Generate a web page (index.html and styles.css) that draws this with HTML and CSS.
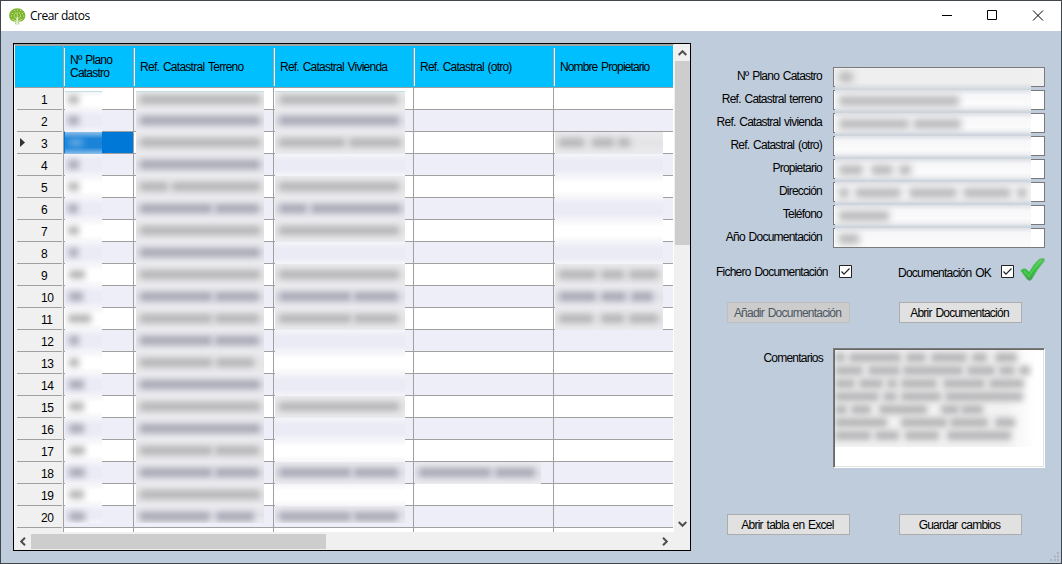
FILE: index.html
```html
<!DOCTYPE html>
<html lang="es">
<head>
<meta charset="utf-8">
<title>Crear datos</title>
<link rel="stylesheet" href="styles.css">
</head>
<body>
<div class="window">
  <header class="titlebar">
    <svg class="logo" width="17" height="17" viewBox="0 0 17 17">
      <path d="M8.200 .3C12.800.3 16.300 3.600 16.300 7.600C16.300 11 14.500 12.800 12 13.600L9.800 13.500L10.300 16.300H6.300L6.800 13.500L4.500 13.600C2 12.800.2 11 .2 7.600C.2 3.600 3.700.3 8.200.3Z" fill="#7fb52c"/>
      <path d="M6.900 16.500L7.600 9.500H8.900L9.700 16.500Z" fill="#e7f2d2"/>
      <path d="M8.200 10V4M8 11L4.500 8M8.500 11L12 8M7 13L3 11M9.500 13L13.500 11" stroke="#dcecc0" stroke-width=".7" fill="none"/>
      <path d="M3 5.500h1M5 2.500h1M8 2h1M11 2.500h1M13 5.500h1M2 8h1M14 8h1M6 5h1M10 5h1M5 7h1M11 7h1" stroke="#cfe4a8" stroke-width="1"/>
    </svg>
    <h1 class="title">Crear datos</h1>
    <svg class="controls" width="104" height="12" viewBox="0 0 104 12" fill="none" stroke="#000">
      <path d="M0 5.500H10"/>
      <path d="M45.500.5H54.500V9.500H45.500Z"/>
      <path d="M91 .5L101 10.500M101 .5L91 10.500"/>
    </svg>
  </header>
  <main class="content">
    <section class="datagrid">
      <div class="viewport">
        <div class="row head">
          <div class="corner"></div>
          <div class="th"><span>Nº Plano<br>Catastro</span></div>
          <div class="th"><span class="loose">Ref. Catastral Terreno</span></div>
          <div class="th"><span>Ref. Catastral Vivienda</span></div>
          <div class="th"><span>Ref. Catastral (otro)</span></div>
          <div class="th"><span class="tight">Nombre Propietario</span></div>
        </div>
        <div id="rows"></div>
      </div>
      <div class="vscroll">
        <svg width="9" height="6" viewBox="0 0 9 6"><path d="M.7 5L4.500 1.200L8.300 5" class="chev"/></svg>
        <div class="vthumb"></div>
        <svg class="down" width="9" height="6" viewBox="0 0 9 6"><path d="M.7 1L4.500 4.800L8.300 1" class="chev"/></svg>
      </div>
      <div class="hscroll">
        <svg width="6" height="9" viewBox="0 0 6 9"><path d="M5 .7L1.200 4.500L5 8.300" class="chev"/></svg>
        <div class="hthumb"></div>
        <svg class="right" width="6" height="9" viewBox="0 0 6 9"><path d="M1 .7L4.800 4.500L1 8.300" class="chev"/></svg>
      </div>
      <div class="scrollcorner"></div>
    </section>
    <section class="details">
      <div class="fields" id="fields"></div>
      <div class="checks">
        <span class="lbl">Fichero Documentación</span>
        <svg class="box" width="13" height="13" viewBox="0 0 13 13"><path d="M.5.5h12v12H.5z" fill="#fff" stroke="#222"/><path d="M2.500 6.500L5 9.200L10.500 3.500" fill="none" stroke="#222" stroke-width="1.200"/></svg>
        <span class="lbl ok">Documentación OK</span>
        <svg class="box box2" width="13" height="13" viewBox="0 0 13 13"><path d="M.5.5h12v12H.5z" fill="#fff" stroke="#222"/><path d="M2.500 6.500L5 9.200L10.500 3.500" fill="none" stroke="#222" stroke-width="1.200"/></svg>
        <svg class="tick" width="25" height="25" viewBox="0 0 25 25">
          <defs><linearGradient id="g" x1="0" y1="0" x2="0" y2="1"><stop offset="0" stop-color="#58c35c"/><stop offset=".55" stop-color="#2fc43a"/><stop offset="1" stop-color="#43a04a"/></linearGradient></defs>
          <path d="M.7 12.500Q3 10 6.300 11.200L9.300 14.300Q14 5.500 19.500 1L24 .6Q24.900 2 23.900 3.500Q17 11 11.500 21.500Q9.500 23.500 7.500 21.500Z" fill="url(#g)" stroke="#62ae72" stroke-width=".7"/>
          <path d="M4 13L9 18.500Q14 9 21.500 2.500" fill="none" stroke="#6edc6c" stroke-width="1.200" opacity=".6"/>
        </svg>
      </div>
      <div class="buttons">
        <button class="btn" disabled>Añadir Documentación</button>
        <button class="btn">Abrir Documentación</button>
      </div>
      <div class="comments">
        <span class="lbl">Comentarios</span>
        <div class="area"><div class="notes" id="notes"></div></div>
      </div>
      <div class="buttons bottom">
        <button class="btn">Abrir tabla en Excel</button>
        <button class="btn">Guardar cambios</button>
      </div>
    </section>
  </main>
  <svg class="grip" width="10" height="10" viewBox="0 0 10 10" fill="#a9b3c0"><path d="M7 0h2v2H7zM4 3.500h2v2H4zM7 3.500h2v2H7zM0 7h2v2H0zM4 7h2v2H4zM7 7h2v2H7z"/></svg>
</div>
<script src="app.js"></script>
</body>
</html>
```

FILE: styles.css
```css
* { box-sizing: border-box; }
body {
  margin: 0;
  overflow: hidden;
  font: 12px/13px "Liberation Sans", Arial, sans-serif;
  letter-spacing: -0.77px;
  word-spacing: 1.2px;
  color: #000;
}
.window {
  position: relative;
  width: 1062px;
  height: 564px;
  border: 1px solid #41464c;
  background: #bfccdc;
}
.titlebar {
  display: flex;
  align-items: center;
  height: 30px;
  background: #fff;
}
.logo { margin-left: 8px; }
.title {
  margin: 0 auto 0 4px;
  font: 12px/16px "Open Sans", "Noto Sans", sans-serif;
  letter-spacing: -0.5px;
  word-spacing: 0;
}
.controls { margin: 0 15px 0 0; }
.content { display: flex; padding: 12px 0 0 12px; }

.datagrid {
  display: grid;
  grid-template: 488px 18px / 660px 16px;
  width: 678px;
  height: 508px;
  border: 1px solid #000;
  background: #f0f0f0;
}
.viewport {
  overflow: hidden;
  border: solid #fff;
  border-width: 2px 1px 0 1px;
  border-top-color: #a0a6a8;
  background: #fff;
}
.row {
  display: grid;
  grid-template-columns: 49px 70px 140px 140px 140px 119px;
  height: 22px;
}
.row.head {
  height: 42px;
  background: #00bfff;
  border-bottom: 1px solid #a0a0a0;
}
.corner { border-right: 1px solid #a0a0a0; }
.th {
  display: flex;
  align-items: center;
  margin: 2px 0 1px;
  padding-left: 5px;
  border-right: 1px solid #a0a0a0;
  border-left: 1px solid #fff;
}
.th:last-child { border-right: 0; }
.loose { letter-spacing: -0.73px; }
.tight { letter-spacing: -0.88px; }
.td, .rh { position: relative; border: solid #a0a0a0; border-width: 0 1px 1px 0; }
.td:last-child { border-right: 0; }
.td { background: #fff; }
.alt .td { background: #eeeef9; }
.row .td.sel { background: #0078d7; }
.rh {
  display: flex;
  align-items: center;
  padding: 2px 0 0 26px;
  letter-spacing: -0.5px;
  background: linear-gradient(#a0a0a0, #a0a0a0) 2px 21px / 45px 1px no-repeat, #f0f0f0;
  border-bottom: 0;
}
.rh svg { position: absolute; left: 5px; top: 6px; }

/* privacy veil laid over a cell and its grid lines */
.veil { position: absolute; left: 1px; top: 0; height: 22px; overflow: hidden; background: linear-gradient(#f4f4f9, #fff 30%, #fff 70%, #f4f4f9); }
.alt .veil { background: linear-gradient(#f4f4f9, #ebebf6 30%, #ebebf6 70%, #f4f4f9); }
.veil.full { background: linear-gradient(#ebebef, #e4e4e6 50%, #ebebef); }
.alt .veil.full { background: linear-gradient(#ebebef, #e1e1e9 50%, #ebebef); }
.sel .veil { background: linear-gradient(#8fc0ea, #1b83d8 30%, #1b83d8 70%, #8fc0ea); }
.first .veil { top: 3px; height: 19px; border-top: 1px solid #c3dfe2; }
.first .smear { top: 3px; }
.last .veil { height: 17px; }
.smear {
  position: absolute;
  top: 6px;
  height: 9px;
  background: #b6b6b8;
  filter: blur(3px);
}
.alt .smear { background: #a9a9b6; }
.sel .smear { background: #5aa5e0; }

.vscroll { display: flex; flex-direction: column; align-items: center; padding: 6px 0 5px; }
.hscroll { display: flex; align-items: center; padding: 0 6px; margin-top: 1px; }
.chev { fill: none; stroke: #505050; stroke-width: 2; }
.vthumb { width: 15px; height: 184px; margin-top: 5px; background: #cdcdcd; }
.down { margin-top: auto; }
.hthumb { width: 295px; height: 15px; margin-left: 5px; background: #cdcdcd; }
.right { margin-left: auto; }

.details { width: 370px; padding-top: 24px; }
.fields { display: grid; gap: 3px; }
.field { display: grid; grid-template-columns: 132px 212px; column-gap: 10px; height: 20px; }
.lbl { white-space: nowrap; text-align: right; }
.field .lbl { padding: 3px 1px 0 0; }
.input { position: relative; border: 1px solid #7a7a7a; background: #fff; }
.input.ro { background: #f0f0f0; }
.haze { position: absolute; left: 1px; top: -1px; width: 196px; height: 23px; overflow: hidden; background: linear-gradient(#dde0e5 0, #f7f7f9 22%, #fbfbfc 60%, #eff0f3 78%, #cfd5dd 95%); }
.field:last-child .haze { height: 19px; background: linear-gradient(#dde0e5, #f7f7f9 25%, #fbfbfc); }
.ro .haze { top: 1px; height: 21px; background: linear-gradient(#efefef 65%, #cfd5dd); }
.haze .smear { top: 6px; height: 10px; background: #b9b9bb; filter: blur(3.500px); }
.ro .haze .smear { top: 3px; }
.checks { display: flex; height: 24px; margin: 10px 0 0 25px; }
.checks .lbl { width: 112px; padding-top: 8px; text-align: left; }
.box { margin: 7px 0 0 11px; }
.checks .ok { width: 93px; margin-left: 46px; padding-top: 9px; }
.box2 { margin-left: 10px; }
.tick { margin-left: 6px; }
.buttons { display: flex; gap: 49px; margin: 20px 0 0 36px; }
.btn {
  width: 123px;
  height: 21px;
  padding: 1px 2px 0 0;
  border: 1px solid #adadad;
  background: #e1e1e1;
  font: inherit;
  letter-spacing: inherit;
  word-spacing: inherit;
  white-space: nowrap;
  color: #000;
}
.btn:disabled { border-color: #bfbfbf; background: #ccc; color: #4a5663; }
.comments { display: grid; grid-template-columns: 132px 212px; column-gap: 10px; margin-top: 25px; }
.comments .lbl { padding-top: 4px; }
.area {
  height: 120px;
  border: 1px solid;
  border-color: #7a7a7a #fff #fff #7a7a7a;
  box-shadow: inset 1px 1px #696969, inset -1px -1px #e3e3e3;
  background: #fff;
}
.notes { position: relative; width: 200px; height: 97px; margin: 1px; overflow: hidden; background: linear-gradient(90deg, #f2f2f3 85%, #fff); }
.notes .smear { height: 9px; background: #b4b4b6; filter: blur(3px); }
.bottom { margin-top: 46px; }
.grip { position: absolute; right: 1px; bottom: 1px; }
```

FILE: app.js
```javascript
// Each list holds [start, width] runs of hidden text, in pixels.
const wide = [[4, 120]];
const split = [[4, 72], [79, 44]];
const none = [];
const rows = [
  [[[3, 11]], wide, [[5, 118]]],
  [[[3, 11]], wide, [[4, 120]]],
  [[[4, 14]], wide, [[4, 66], [74, 52]], null, [[4, 25], [37, 22], [63, 12]]],
  [[[3, 11]], wide, none, null, none],
  [[[3, 11]], [[4, 28], [36, 88]], wide, null, none],
  [[[3, 10]], split, [[4, 28], [36, 90]], null, none],
  [[[3, 11]], wide, wide, null, none],
  [[[4, 9]], wide, none, null, none],
  [[[4, 16]], wide, wide, null, [[4, 37], [46, 23], [74, 29]]],
  [[[4, 14]], split, split, null, [[4, 37], [46, 25], [76, 22]]],
  [[[3, 23]], split, split, null, [[4, 34], [46, 23], [74, 29]]],
  [[[4, 10]], split, none],
  [[[4, 10]], [[4, 72], [80, 38]], none],
  [[[4, 15]], wide, none],
  [[[4, 15]], wide, wide],
  [[[4, 15]], wide, none],
  [[[4, 16]], split, none],
  [[[4, 16]], split, split, [[4, 72], [80, 40]]],
  [[[4, 15]], wide, none],
  [[[4, 16]], [[4, 70], [80, 38]], split],
  [null, null, null, null, null]
];
const veilWidth = [37, 128, 130, 126, 108];
const smears = runs => runs.map(([x, w]) => `<i class="smear" style="left:${x}px;width:${w}px"></i>`).join("");

document.getElementById("rows").innerHTML = rows.map((r, i) => {
  const cells = [0, 1, 2, 3, 4].map(c => {
    const veil = r[c] ? `<div class="veil ${c === 1 || (c > 1 && r[c].length) ? "full" : ""}" style="width:${veilWidth[c]}px${c === 1 ? ";left:2px" : ""}">${smears(r[c])}</div>` : "";
    return `<div class="td ${i === 2 && c === 0 ? "sel" : ""}">${veil}</div>`;
  }).join("");
  const arrow = i === 2 ? '<svg width="6" height="9" viewBox="0 0 6 9"><path d="M0 0L5 4.500L0 9Z" fill="#333"/></svg>' : "";
  const state = (i % 2 ? "alt " : "") + (i === 0 ? "first" : i === 19 ? "last" : "");
  return `<div class="row ${state}"><div class="rh">${arrow}${i < 20 ? i + 1 : ""}</div>${cells}</div>`;
}).join("");

const fields = [
  ["Nº Plano Catastro", [[4, 14]]],
  ["Ref. Catastral terreno", [[4, 120]]],
  ["Ref. Catastral vivienda", [[4, 70], [78, 48]]],
  ["Ref. Catastral (otro)", []],
  ["Propietario", [[4, 24], [36, 22], [64, 12]]],
  ["Dirección", [[4, 10], [20, 46], [74, 48], [128, 48], [182, 10]]],
  ["Teléfono", [[4, 50]]],
  ["Año Documentación", [[4, 20]]]
];
document.getElementById("fields").innerHTML = fields.map(([name, runs], i) =>
  `<div class="field"><span class="lbl">${name}</span><div class="input ${i ? "" : "ro"}"><div class="haze">${smears(runs)}</div></div></div>`
).join("");

const lines = [
  [[0, 10], [14, 52], [71, 20], [96, 36], [137, 15], [160, 22]],
  [[0, 28], [33, 32], [68, 60], [132, 28], [164, 16], [184, 11]],
  [[0, 20], [24, 24], [52, 10], [66, 36], [108, 42], [154, 35]],
  [[0, 44], [48, 14], [66, 40], [110, 78]],
  [[0, 12], [16, 20], [44, 48], [106, 18], [126, 22]],
  [[0, 52], [66, 46], [115, 38], [160, 20]],
  [[0, 36], [40, 24], [70, 34], [112, 64]]
];
document.getElementById("notes").innerHTML = lines.map((runs, n) =>
  runs.map(([x, w]) => `<i class="smear" style="left:${x}px;top:${3 + n * 13}px;width:${w}px"></i>`).join("")
).join("");
```
